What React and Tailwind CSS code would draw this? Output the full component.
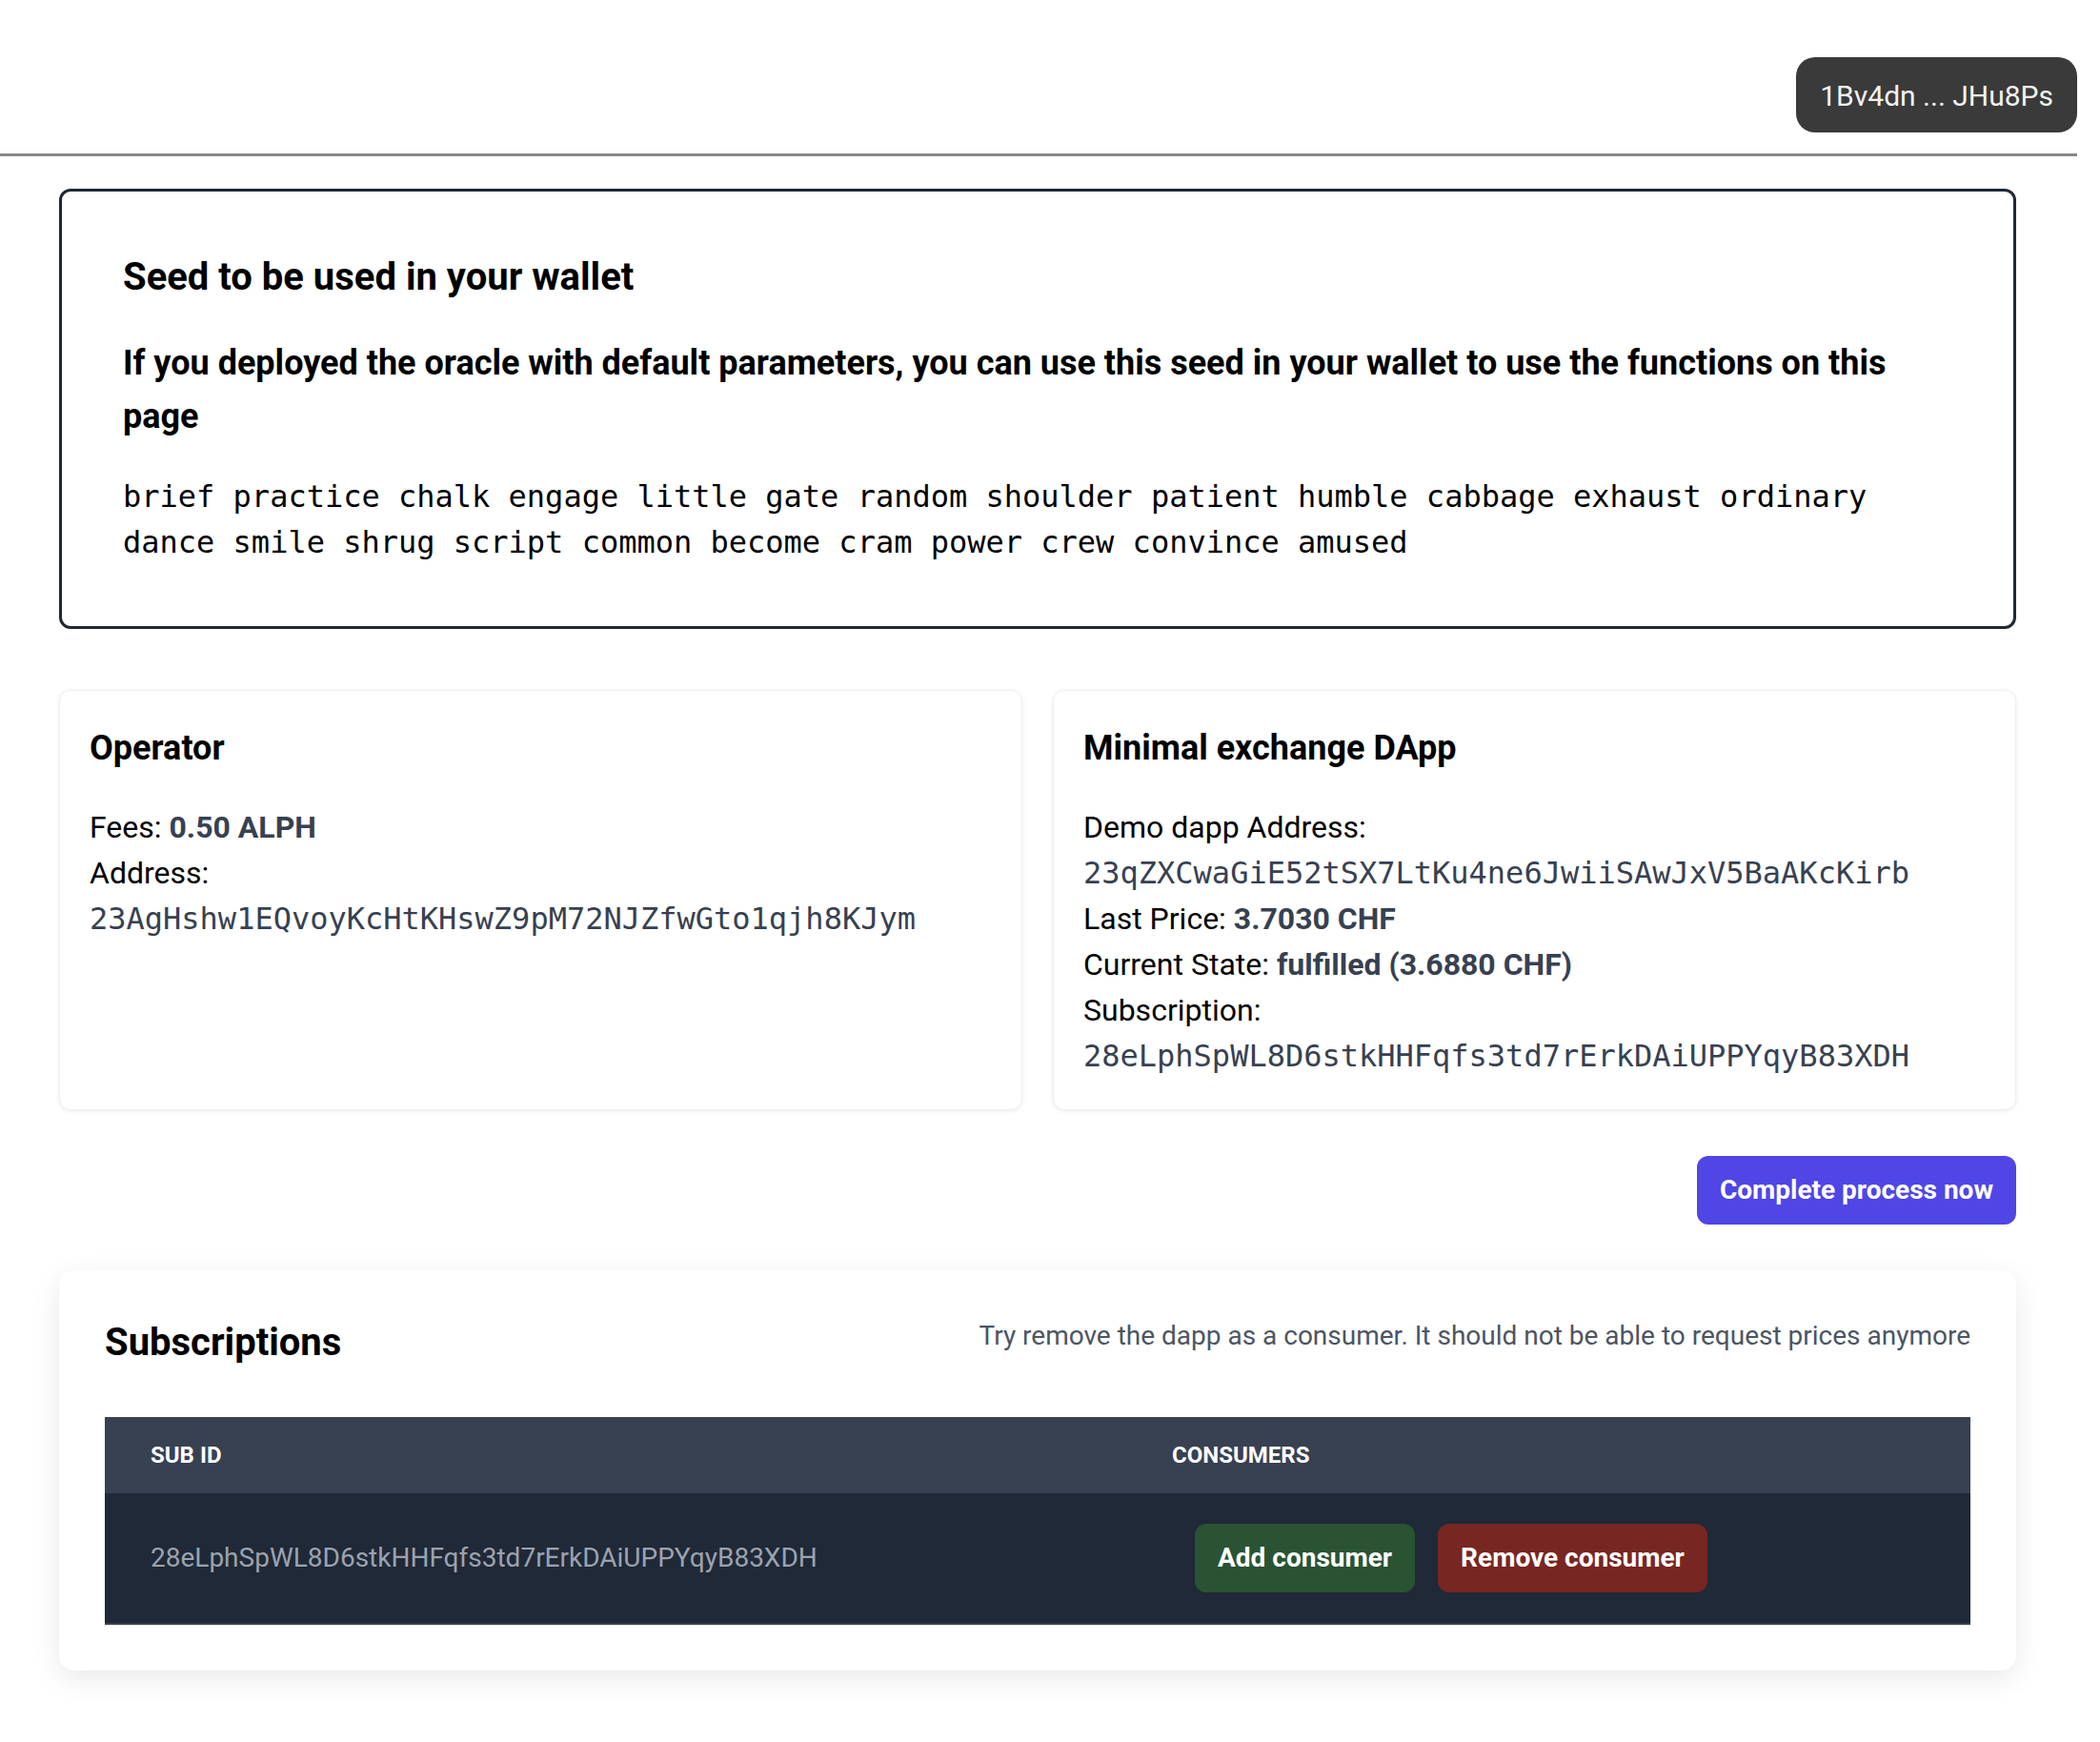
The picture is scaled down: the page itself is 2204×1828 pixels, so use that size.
import { Fragment } from 'react'

const sans = "font-['Roboto',sans-serif]"
const mono = "font-['DejaVu_Sans_Mono',monospace]"

const seed =
  'brief practice chalk engage little gate random shoulder patient humble cabbage exhaust ordinary dance smile shrug script common become cram power crew convince amused'

function Card({ title, children }) {
  return (
    <div className="rounded-[12px] border border-[#f0f0f0] bg-white px-[31px] pt-[32px] pb-[32px] shadow-[0_1px_5px_rgba(0,0,0,0.08)]">
      <h3 className="text-[36px] leading-[56px] font-bold text-black">{title}</h3>
      <div className="mt-[31px] text-[32px] leading-[48px] text-black">{children}</div>
    </div>
  )
}

function Value({ children }) {
  return <span className="font-bold text-[#374151]">{children}</span>
}

function Mono({ children }) {
  return <div className={`${mono} text-[32px] leading-[48px] text-[#374151]`}>{children}</div>
}

export default function App() {
  return (
    <div className={`${sans} w-[2180px] min-h-[1828px] bg-white text-black`}>
      {/* Header */}
      <header className="h-[161px] flex justify-end items-start pt-[60px]">
        <button className="h-[79px] px-[25px] rounded-[20px] bg-[#3a3a3a] text-[#f2f2f2] text-[30px] flex items-center pt-[2px]">
          1Bv4dn ... JHu8Ps
        </button>
      </header>
      <div className="h-[3px] bg-[#878787]" />

      <main className="pl-[62px] pr-[64px] pt-[34px] pb-[78px]">
        {/* Seed */}
        <section className="rounded-[12px] border-[3px] border-[#1f2937] px-[64px] pt-[62px] pb-[64px]">
          <h2 className="text-[40px] leading-[56px] font-bold text-black">Seed to be used in your wallet</h2>
          <p className="mt-[34px] text-[36px] leading-[56px] font-bold text-black">
            If you deployed the oracle with default parameters, you can use this seed in your wallet to use the functions on this page
          </p>
          <p className={`${mono} mt-[32px] text-[32px] leading-[48px] text-black`}>{seed}</p>
        </section>

        {/* Operator / DApp */}
        <div className="mt-[64px] grid grid-cols-2 gap-[32px]">
          <Card title="Operator">
            <div>
              Fees: <Value>0.50 ALPH</Value>
            </div>
            <div>Address:</div>
            <Mono>23AgHshw1EQvoyKcHtKHswZ9pM72NJZfwGto1qjh8KJym</Mono>
          </Card>
          <Card title="Minimal exchange DApp">
            <div>Demo dapp Address:</div>
            <Mono>23qZXCwaGiE52tSX7LtKu4ne6JwiiSAwJxV5BaAKcKirb</Mono>
            <div>
              Last Price: <Value>3.7030 CHF</Value>
            </div>
            <div>
              Current State: <Value>fulfilled (3.6880 CHF)</Value>
            </div>
            <div>Subscription:</div>
            <Mono>28eLphSpWL8D6stkHHFqfs3td7rErkDAiUPPYqyB83XDH</Mono>
          </Card>
        </div>

        <div className="mt-[48px] flex justify-end">
          <button className="rounded-[12px] bg-[#4f46e5] px-[24px] py-[16px] text-[28px] leading-[40px] font-bold text-white">
            Complete process now
          </button>
        </div>

        {/* Subscriptions */}
        <section className="mt-[48px] rounded-[16px] bg-white p-[48px] shadow-[0_8px_30px_rgba(0,0,0,0.09)]">
          <div className="flex items-start justify-between">
            <h2 className="text-[40px] leading-[56px] font-bold text-black">Subscriptions</h2>
            <p className="mt-[1px] text-[28px] leading-[40px] text-[#4b5563]">
              Try remove the dapp as a consumer. It should not be able to request prices anymore
            </p>
          </div>

          <div className="mt-[50px]">
            <div className="grid grid-cols-[1072px_1fr] bg-[#374151]">
              {['Sub ID', 'Consumers'].map((h) => (
                <Fragment key={h}>
                  <div className="px-[48px] py-[24px] text-[24px] leading-[32px] font-bold uppercase text-white">{h}</div>
                </Fragment>
              ))}
            </div>
            <div className="grid grid-cols-[1072px_1fr] items-center bg-[#1f2937] border-b-[2px] border-[#374151]">
              <div className="px-[48px] py-[32px] text-[28px] leading-[40px] text-[#9ca3af]">
                28eLphSpWL8D6stkHHFqfs3td7rErkDAiUPPYqyB83XDH
              </div>
              <div className="px-[48px] py-[32px]">
                <div className="ml-[24px] flex gap-[24px]">
                  <button className="rounded-[12px] bg-[#2a5334] px-[24px] py-[16px] text-[28px] leading-[40px] font-bold text-white">
                    Add consumer
                  </button>
                  <button className="rounded-[12px] bg-[#782622] px-[24px] py-[16px] text-[28px] leading-[40px] font-bold text-white">
                    Remove consumer
                  </button>
                </div>
              </div>
            </div>
          </div>
        </section>
      </main>
    </div>
  )
}
